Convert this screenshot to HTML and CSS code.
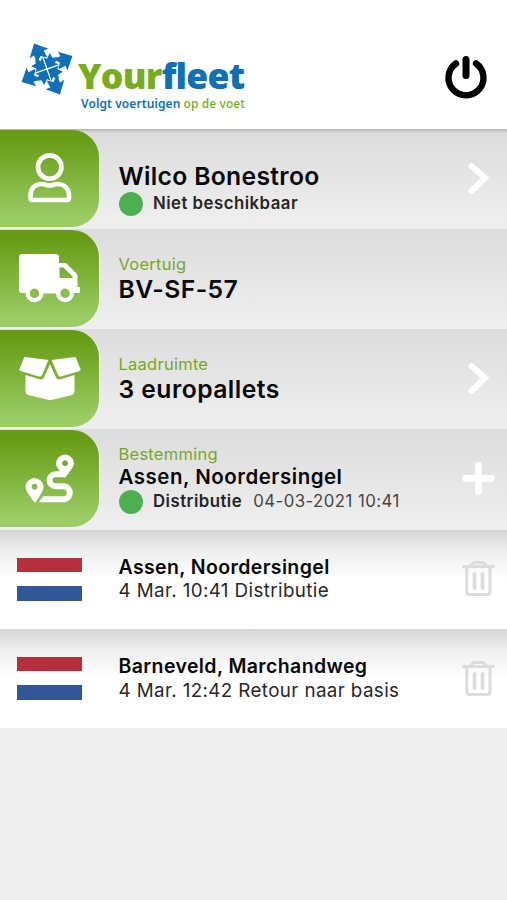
FILE: index.html
```html
<!DOCTYPE html>
<html lang="nl">
<head>
<meta charset="utf-8">
<meta name="viewport" content="width=device-width, initial-scale=1">
<title>Yourfleet</title>
<link rel="stylesheet" href="styles.css">
</head>
<body>
<header class="header">
  <div class="brand">
    <svg class="brand-mark" viewBox="-26 -26 52 52" aria-hidden="true">
      <defs>
        <path id="outer" d="M0-28.500L10.500-17.500L5.500-18V-10L0-14.500L-5.500-10V-18L-10.500-17.500Z"/>
        <path id="inner" d="M0-.9L8.500-9.300L4.500-9V-15.500L0-12.500L-4.500-15.500V-9L-8.500-9.300Z"/>
      </defs>
      <g fill="#0f70b7">
        <use href="#outer" transform="rotate(63)"/><use href="#outer" transform="rotate(153)"/>
        <use href="#outer" transform="rotate(243)"/><use href="#outer" transform="rotate(333)"/>
        <use href="#inner" transform="rotate(26)"/><use href="#inner" transform="rotate(116)"/>
        <use href="#inner" transform="rotate(206)"/><use href="#inner" transform="rotate(296)"/>
      </g>
    </svg>
    <div class="brand-text">
      <div class="brand-name">Your<span>fleet</span></div>
      <div class="brand-tag"><b>Volgt voertuigen</b> op de voet</div>
    </div>
  </div>
  <svg class="power" viewBox="0 0 44 44" fill="none" stroke="#000" aria-label="Uitloggen">
    <path d="M12 8.500A17.500 17.500 0 1 0 32 8.500" stroke-width="6.400" stroke-linecap="round"/>
    <path d="M22 4.500V20.500" stroke-width="7" stroke-linecap="round"/>
  </svg>
</header>
<main>
  <section class="row first">
    <div class="tile">
      <svg viewBox="0 0 98 97" fill="none" stroke="#fff" stroke-width="4.700" stroke-linejoin="round">
        <circle cx="49.700" cy="37" r="11.700"/>
        <path d="M32.700 70H67.300Q69 70 69 68.300V66C69 58 64 54 57 54C54 54 53 55.500 49.700 55.500S45 54 42 54C35 54 30.600 58 30.600 66V68.300Q30.600 70 32.700 70Z"/>
      </svg>
    </div>
    <div class="info driver">
      <div class="title">Wilco Bonestroo</div>
      <div class="status"><i class="dot"></i><b>Niet beschikbaar</b></div>
    </div>
    <svg class="action" viewBox="0 0 34 34"><path d="M10.500 5L24 17L10.500 30" fill="none" stroke="#fff" stroke-width="6" stroke-linecap="round"/></svg>
  </section>
  <section class="row">
    <div class="tile">
      <svg viewBox="0 0 98 97">
        <path fill="#fff" fill-rule="evenodd" d="M22 24H56Q59 24 59 27V33H64.500Q66 33 67 34L76.500 43.500Q77.500 44.500 77.500 46V57H79Q80 57 80 58V62Q80 63 79 63H74A9 9 0 0 1 56 63.500H43.500A9 9 0 0 1 25.500 63H22Q19 63 19 60V27Q19 24 22 24ZM59.500 37.500V48H72.500V46.500L63.500 37.500ZM34.400 58.600A4.700 4.700 0 1 0 34.500 58.600ZM65 58.600A4.700 4.700 0 1 0 65.100 58.600Z"/>
      </svg>
    </div>
    <div class="info">
      <div class="label">Voertuig</div>
      <div class="title plate">BV-SF-57</div>
    </div>
  </section>
  <section class="row">
    <div class="tile">
      <svg viewBox="0 0 98 97" fill="#fff">
        <path d="M25 27L48.500 30L42 45Q41 47 39 46.500L20.500 41Q19 40.500 19.500 39L24 28Q24.300 27 25 27Z"/>
        <path d="M75 27L51.500 30L58 45Q59 47 61 46.500L79.500 41Q81 40.500 80.500 39L76 28Q75.700 27 75 27Z"/>
        <path d="M25.500 45L40 49.500Q43 50 44 47.500L50 34L56 47.500Q57 50 60 49.500L74.500 45V61Q74.500 64 72 65L51 70Q50 70.300 49 70L28 65Q25.500 64 25.500 61Z"/>
      </svg>
    </div>
    <div class="info">
      <div class="label">Laadruimte</div>
      <div class="title pallets">3 europallets</div>
    </div>
    <svg class="action" viewBox="0 0 34 34"><path d="M10.500 5L24 17L10.500 30" fill="none" stroke="#fff" stroke-width="6" stroke-linecap="round"/></svg>
  </section>
  <section class="row last">
    <div class="tile">
      <svg viewBox="0 0 98 97">
        <path fill="#fff" fill-rule="evenodd" d="M35 73C32 69 25.500 61 25.500 57A9 9 0 0 1 43.500 57C43.500 61 38 69 35 73ZM34.500 53.700A3 3 0 1 0 34.600 53.700ZM65 48C62 44 56 37 56 33.500A9 9 0 0 1 74 33.500C74 37 68 44 65 48ZM65 30.200A3 3 0 1 0 65.100 30.200Z"/>
        <path d="M64 44.300H55.500A5.800 5.800 0 0 0 55.500 56.200H64.500A6.700 6.700 0 0 1 64.500 69.300H43" fill="none" stroke="#fff" stroke-width="6"/>
        <path d="M38.500 72.300L43.500 66.300V72.300Z" fill="#fff"/>
      </svg>
    </div>
    <div class="info destination">
      <div class="label">Bestemming</div>
      <div class="place">Assen, Noordersingel</div>
      <div class="status"><i class="dot"></i><b>Distributie</b><span class="date">04-03-2021 10:41</span></div>
    </div>
    <svg class="action" viewBox="0 0 34 34"><path d="M17.500 4V30.500M4.500 17.300H30.500" fill="none" stroke="#fff" stroke-width="6.700" stroke-linecap="round"/></svg>
  </section>
  <section class="stop">
    <div class="flag"></div>
    <div class="stop-text"><b>Assen, Noordersingel</b><span>4 Mar. 10:41 Distributie</span></div>
    <svg class="trash" viewBox="0 0 34 40" fill="none" stroke="#dcdcdc" stroke-width="3"><path d="M.3 8.500H32.700M4.800 9V33.500Q4.800 36.500 7.500 36.500H25.300Q28 36.500 28 33.500V9M8 8.500L11 5Q11.500 4.500 13 4.500H20Q21.500 4.500 22 5L25 8.500"/><path d="M12.500 14.500V31.500M20.500 14.500V31.500" stroke-width="3.600"/></svg>
  </section>
  <section class="stop">
    <div class="flag"></div>
    <div class="stop-text"><b>Barneveld, Marchandweg</b><span>4 Mar. 12:42 Retour naar basis</span></div>
    <svg class="trash" viewBox="0 0 34 40" fill="none" stroke="#dcdcdc" stroke-width="3"><path d="M.3 8.500H32.700M4.800 9V33.500Q4.800 36.500 7.500 36.500H25.300Q28 36.500 28 33.500V9M8 8.500L11 5Q11.500 4.500 13 4.500H20Q21.500 4.500 22 5L25 8.500"/><path d="M12.500 14.500V31.500M20.500 14.500V31.500" stroke-width="3.600"/></svg>
  </section>
</main>
</body>
</html>
```
FILE: styles.css
```css
* { box-sizing: border-box; }
body {
  margin: 0;
  min-height: 100vh;
  background: #eee;
  color: #080808;
  font-family: Inter, "Liberation Sans", sans-serif;
  white-space: nowrap;
}
.header {
  height: 129px;
  background: #fff;
  display: flex;
  justify-content: space-between;
  padding: 43px 19px 0 21px;
}
.brand { display: flex; }
.brand-mark { width: 52px; height: 52px; }
.brand-text { padding: 12px 0 0 5px; font-family: "Open Sans", sans-serif; color: #76ae1b; }
.brand-name { font-size: 35.500px; line-height: 40px; font-weight: 800; letter-spacing: -.75px; }
.brand-name span { color: #0f70b7; }
.brand-tag {
  font-family: "Noto Sans", sans-serif;
  font-size: 12px;
  line-height: 16px;
  padding: 1px 0 0 3px;
  font-weight: 500;
  letter-spacing: .09px;
}
.brand-tag b { color: #0f70b7; font-weight: 600; }
.power { width: 44px; height: 44px; margin-top: 12px; }
.row {
  height: 100px;
  display: flex;
  background: linear-gradient(#dcdcdc, #eee 92%);
}
.first { background: linear-gradient(#b4b4b4, #dcdcdc 4px, #eee 92%); }
.last { height: 100.500px; }
.tile {
  width: 99px;
  height: 97px;
  margin-top: 1px;
  flex: none;
  border-radius: 0 27px 27px 0;
  background: linear-gradient(#659c14 8%, #9bcd66 92%);
  box-shadow: 0 1px 1px 1px #f1f1f1;
}
.first .tile { box-shadow: 0 2px 1px #f1f1f1; }
.tile svg { display: block; width: 98px; height: 97px; }
.info { padding: 25px 0 0 20px; flex: 1; }
.driver { padding-top: 32px; }
.destination { padding-top: 15px; }
.label { color: #76a826; font-size: 16.500px; line-height: 20px; letter-spacing: .25px; margin-left: -.5px; }
.title { font-size: 24.700px; line-height: 31px; font-weight: 600; letter-spacing: .32px; }
.driver .title { margin-left: -.5px; }
.plate, .pallets { letter-spacing: .45px; margin-left: -.5px; }
.place { font-size: 20.500px; line-height: 26px; font-weight: 600; letter-spacing: .5px; margin-left: -.5px; }
.status { display: flex; align-items: center; height: 21px; font-size: 16.800px; color: #252525; }
.status b { font-weight: 600; letter-spacing: .48px; }
.dot { width: 24px; height: 24px; border-radius: 50%; background: #4caf50; margin-right: 10px; margin-top: 3px; }
.date { margin-left: 11px; color: #444; letter-spacing: .45px; }
.action { width: 34px; height: 34px; margin: 32px 12px 0 0; }
.stop {
  height: 99.500px;
  display: flex;
  background: linear-gradient(#d5d5d5, #eee 20%, #fff 50%);
}
.stop:last-child { height: 99px; }
.flag {
  width: 65px;
  height: 43px;
  margin: 28px 36.500px 0 17px;
  background: linear-gradient(#b62f3d 0 14.500px, #fff 14.500px 28.500px, #325799 28.500px);
}
.stop-text { display: flex; flex-direction: column; flex: 1; padding-top: 26px; line-height: 23.800px; }
.stop-text b { font-size: 19.500px; font-weight: 600; letter-spacing: .38px; }
.stop-text span { font-size: 18.800px; color: #282828; letter-spacing: .38px; }
.trash { width: 34px; height: 40px; margin: 28.500px 11px 0 0; }
```
